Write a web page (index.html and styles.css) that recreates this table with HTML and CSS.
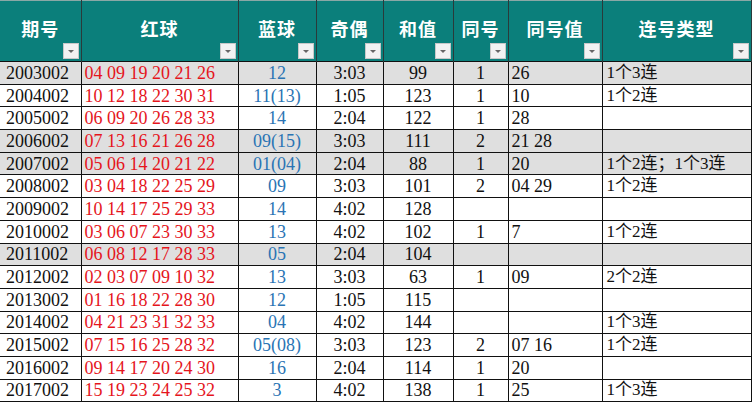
FILE: index.html
```html
<!DOCTYPE html>
<html lang="zh">
<head>
<meta charset="utf-8">
<link rel="stylesheet" href="styles.css">
</head>
<body>
<table class="sheet">
  <colgroup>
    <col class="c1"><col class="c2"><col class="c3"><col class="c4"><col class="c5"><col class="c6"><col class="c7"><col class="c8">
  </colgroup>
  <thead>
    <tr>
      <th>期号<span class="flt"></span></th>
      <th>红球<span class="flt"></span></th>
      <th>蓝球<span class="flt"></span></th>
      <th>奇偶<span class="flt"></span></th>
      <th>和值<span class="flt"></span></th>
      <th>同号<span class="flt"></span></th>
      <th>同号值<span class="flt"></span></th>
      <th>连号类型<span class="flt"></span></th>
    </tr>
  </thead>
  <tbody>
    <tr class="gray"><td class="id">2003002</td><td class="red">04 09 19 20 21 26</td><td class="blue">12</td><td class="ctr">3:03</td><td class="ctr">99</td><td class="ctr">1</td><td class="lft">26</td><td class="lft cn">1个3连</td></tr>
    <tr><td class="id">2004002</td><td class="red">10 12 18 22 30 31</td><td class="blue">11(13)</td><td class="ctr">1:05</td><td class="ctr">123</td><td class="ctr">1</td><td class="lft">10</td><td class="lft cn">1个2连</td></tr>
    <tr><td class="id">2005002</td><td class="red">06 09 20 26 28 33</td><td class="blue">14</td><td class="ctr">2:04</td><td class="ctr">122</td><td class="ctr">1</td><td class="lft">28</td><td class="lft cn"></td></tr>
    <tr class="gray"><td class="id">2006002</td><td class="red">07 13 16 21 26 28</td><td class="blue">09(15)</td><td class="ctr">3:03</td><td class="ctr">111</td><td class="ctr">2</td><td class="lft">21 28</td><td class="lft cn"></td></tr>
    <tr class="gray"><td class="id">2007002</td><td class="red">05 06 14 20 21 22</td><td class="blue">01(04)</td><td class="ctr">2:04</td><td class="ctr">88</td><td class="ctr">1</td><td class="lft">20</td><td class="lft cn">1个2连；1个3连</td></tr>
    <tr><td class="id">2008002</td><td class="red">03 04 18 22 25 29</td><td class="blue">09</td><td class="ctr">3:03</td><td class="ctr">101</td><td class="ctr">2</td><td class="lft">04 29</td><td class="lft cn">1个2连</td></tr>
    <tr><td class="id">2009002</td><td class="red">10 14 17 25 29 33</td><td class="blue">14</td><td class="ctr">4:02</td><td class="ctr">128</td><td class="ctr"></td><td class="lft"></td><td class="lft cn"></td></tr>
    <tr><td class="id">2010002</td><td class="red">03 06 07 23 30 33</td><td class="blue">13</td><td class="ctr">4:02</td><td class="ctr">102</td><td class="ctr">1</td><td class="lft">7</td><td class="lft cn">1个2连</td></tr>
    <tr class="gray"><td class="id">2011002</td><td class="red">06 08 12 17 28 33</td><td class="blue">05</td><td class="ctr">2:04</td><td class="ctr">104</td><td class="ctr"></td><td class="lft"></td><td class="lft cn"></td></tr>
    <tr><td class="id">2012002</td><td class="red">02 03 07 09 10 32</td><td class="blue">13</td><td class="ctr">3:03</td><td class="ctr">63</td><td class="ctr">1</td><td class="lft">09</td><td class="lft cn">2个2连</td></tr>
    <tr><td class="id">2013002</td><td class="red">01 16 18 22 28 30</td><td class="blue">12</td><td class="ctr">1:05</td><td class="ctr">115</td><td class="ctr"></td><td class="lft"></td><td class="lft cn"></td></tr>
    <tr><td class="id">2014002</td><td class="red">04 21 23 31 32 33</td><td class="blue">04</td><td class="ctr">4:02</td><td class="ctr">144</td><td class="ctr"></td><td class="lft"></td><td class="lft cn">1个3连</td></tr>
    <tr><td class="id">2015002</td><td class="red">07 15 16 25 28 32</td><td class="blue">05(08)</td><td class="ctr">3:03</td><td class="ctr">123</td><td class="ctr">2</td><td class="lft">07 16</td><td class="lft cn">1个2连</td></tr>
    <tr><td class="id">2016002</td><td class="red">09 14 17 20 24 30</td><td class="blue">16</td><td class="ctr">2:04</td><td class="ctr">114</td><td class="ctr">1</td><td class="lft">20</td><td class="lft cn"></td></tr>
    <tr><td class="id">2017002</td><td class="red">15 19 23 24 25 32</td><td class="blue">3</td><td class="ctr">4:02</td><td class="ctr">138</td><td class="ctr">1</td><td class="lft">25</td><td class="lft cn">1个3连</td></tr>
  </tbody>
</table>
</body>
</html>
```

FILE: styles.css
```css
html, body {
  margin: 0;
  padding: 0;
  background: #ffffff;
}

.sheet {
  border-collapse: collapse;
  table-layout: fixed;
  width: 751px;
  font-family: "Liberation Serif", "Noto Sans CJK SC", serif;
  font-size: 18px;
  color: #111;
}

.c1 { width: 81px; }
.c2 { width: 157px; }
.c3 { width: 78px; }
.c4 { width: 67px; }
.c5 { width: 70px; }
.c6 { width: 55px; }
.c7 { width: 94px; }
.c8 { width: 149px; }

.sheet th {
  position: relative;
  height: 53px;
  padding: 0 0 7px 0;
  background: #0b7f7b;
  color: #ffffff;
  font-family: "Noto Sans CJK SC", sans-serif;
  font-weight: bold;
  font-size: 18px;
  letter-spacing: 1px;
  text-align: center;
  vertical-align: middle;
  border-left: 1px solid #2a3a3a;
  border-right: 1px solid #2a3a3a;
  border-top: 1px solid #8aa8a6;
  line-height: 1;
}

.sheet th:first-child {
  border-left: none;
}

.flt {
  position: absolute;
  right: 2px;
  bottom: 2px;
  width: 14px;
  height: 14px;
  background: #f2f2f2;
  border: 1px solid #c8c8c8;
}

.flt::after {
  content: "";
  position: absolute;
  left: 4px;
  top: 6px;
  border-left: 3px solid transparent;
  border-right: 3px solid transparent;
  border-top: 3px solid #666;
}

.sheet td {
  height: 21.7px;
  padding: 0;
  line-height: 20px;
  border: 1px solid #111;
  white-space: nowrap;
  overflow: hidden;
  background: #ffffff;
}

.sheet td:first-child {
  border-left: none;
}

.sheet tr.gray td {
  background: #dfdfdf;
}

.id {
  padding-left: 6px !important;
  text-align: left;
}

.red {
  color: #e5151c;
  padding-left: 3px !important;
}

.blue {
  color: #2a74b4;
  text-align: center;
}

.ctr {
  text-align: center;
}

.lft {
  text-align: left;
  padding-left: 3px !important;
}

.cn {
  padding-left: 4px !important;
  font-family: "Liberation Serif", "Noto Sans CJK SC", serif;
  font-size: 17px;
}
```
